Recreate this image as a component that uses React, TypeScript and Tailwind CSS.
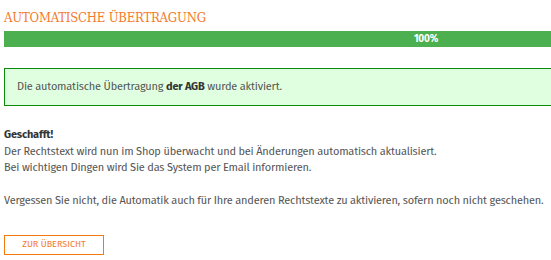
import React from 'react';

const ProgressBar: React.FC<{ value: number }> = ({ value }) => (
  <div className="h-4 w-full bg-[#e5e5e5]">
    <div
      className="h-full bg-[#4caf50] flex items-center justify-center text-white text-[10px] font-bold leading-none"
      style={{ width: `${value}%` }}
    >
      {value}%
    </div>
  </div>
);

export default function App() {
  return (
    <div className="w-[551px] h-[260px] overflow-hidden bg-white">
      <div className="w-[848px] pl-1 pt-[9px] font-['Fira_Sans','Roboto','Liberation_Sans',sans-serif] text-[#555] text-[11px] tracking-[-0.2px]">
        {/* Heading */}
        <h2 className="font-['DejaVu_Serif_Condensed','DejaVu_Serif','Liberation_Serif',serif] text-[#f47a2a] text-[13px] leading-[18px] tracking-[-0.2px] mb-[4px]">
          AUTOMATISCHE ÜBERTRAGUNG
        </h2>
        <ProgressBar value={100} />

        {/* Success alert */}
        <div className="mt-[21px] border border-[#0a8a0a] bg-[#e0ffe0] h-[38px] pl-3 flex items-center">
          <p>
            Die automatische Übertragung <strong className="text-[#333]">der AGB</strong> wurde aktiviert.
          </p>
        </div>

        {/* Body text */}
        <div className="mt-[21px] leading-[16.5px]">
          <p className="font-bold text-[#333]">Geschafft!</p>
          <p>Der Rechtstext wird nun im Shop überwacht und bei Änderungen automatisch aktualisiert.</p>
          <p>Bei wichtigen Dingen wird Sie das System per Email informieren.</p>
          <p className="mt-[16.5px]">
            Vergessen Sie nicht, die Automatik auch für Ihre anderen Rechtstexte zu aktivieren, sofern noch nicht geschehen.
          </p>
        </div>

        {/* Button */}
        <button className="mt-[25px] w-[100px] h-[20px] border border-[#f47a10] text-[#f47a2a] text-[9px] tracking-normal leading-none uppercase flex items-center justify-center">
          Zur Übersicht
        </button>
      </div>
    </div>
  );
}
